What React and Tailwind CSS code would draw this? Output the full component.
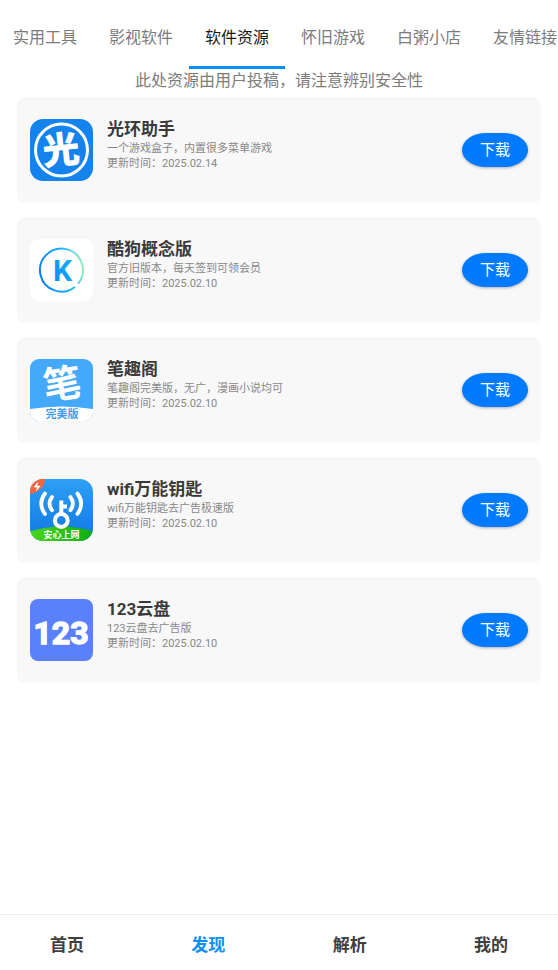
import { useState } from 'react';

const GuangIcon = () => (
    <svg viewBox="0 0 63 62" className="w-[63px] h-[62px] shrink-0" aria-hidden="true">
        <rect width="63" height="62" rx="13" fill="#1583ee" />
        <circle cx="31.5" cy="31" r="26" fill="none" stroke="#fff" strokeWidth="3" />
        <text x="31" y="44" textAnchor="middle" transform="rotate(-6 31.5 31)" fontSize="36" fontWeight="700" fill="#fff" stroke="#fff" strokeWidth="1.2" fontFamily="Noto Sans CJK SC, sans-serif">光</text>
    </svg>
);

const KugouIcon = () => (
    <svg viewBox="0 0 63 62" className="w-[63px] h-[62px] shrink-0" aria-hidden="true">
        <defs>
            <linearGradient id="kugouRing" x1="0" y1="0.6" x2="1" y2="0.4">
                <stop offset="0" stopColor="#0a7cf8" />
                <stop offset="0.6" stopColor="#1fb3f5" />
                <stop offset="1" stopColor="#8df0c0" />
            </linearGradient>
            <linearGradient id="kugouK" x1="0" y1="1" x2="1" y2="0">
                <stop offset="0" stopColor="#0b86f7" />
                <stop offset="1" stopColor="#17b8f4" />
            </linearGradient>
        </defs>
        <rect width="63" height="62" rx="9" fill="#fff" />
        <path d="M45.1 47.7 A21.5 21.5 0 1 1 48.1 44.7" fill="none" stroke="url(#kugouRing)" strokeWidth="2" />
        <text x="32.5" y="41.5" textAnchor="middle" fontSize="30" fontWeight="700" fill="url(#kugouK)" fontFamily="Roboto, sans-serif">K</text>
    </svg>
);

const BiquIcon = () => (
    <svg viewBox="0 0 63 62" className="w-[63px] h-[62px] shrink-0" aria-hidden="true">
        <defs>
            <clipPath id="biquClip">
                <rect width="63" height="62" rx="9" />
            </clipPath>
        </defs>
        <g clipPath="url(#biquClip)">
            <rect width="63" height="62" fill="#45a9fb" />
            <path d="M0 50 Q31.5 45 63 50 V62 H0 Z" fill="#fff" />
        </g>
        <text x="32" y="38.5" textAnchor="middle" transform="rotate(-8 32 24)" fontSize="38" fontWeight="700" fill="#fff" fontFamily="Noto Sans CJK SC, sans-serif">笔</text>
        <text x="32" y="58.5" textAnchor="middle" fontSize="11" fontWeight="700" fill="#3f9df0" fontFamily="Noto Sans CJK SC, sans-serif">完美版</text>
    </svg>
);

const WifiKeyIcon = () => (
    <svg viewBox="0 0 63 62" className="w-[63px] h-[62px] shrink-0" aria-hidden="true">
        <defs>
            <linearGradient id="wifiSky" x1="0" y1="0" x2="0" y2="1">
                <stop offset="0" stopColor="#2f9ff5" />
                <stop offset="1" stopColor="#0f78e2" />
            </linearGradient>
            <linearGradient id="wifiGrass" x1="0" y1="0" x2="1" y2="0">
                <stop offset="0" stopColor="#4ad61c" />
                <stop offset="1" stopColor="#10ad12" />
            </linearGradient>
            <clipPath id="wifiClip">
                <rect width="63" height="62" rx="13" />
            </clipPath>
        </defs>
        <g clipPath="url(#wifiClip)">
            <rect width="63" height="62" fill="url(#wifiSky)" />
            <path d="M0 0 H15 Q14 12 0 15 Z" fill="#f8623f" />
            <path d="M8.2 2.5 L3.5 8.2 L7 8.6 L5.8 12.8 L10.6 7 L7.2 6.6 Z" fill="#fff" />
            <path d="M0 52.5 Q31.5 42.5 63 52.5 V62 H0 Z" fill="url(#wifiGrass)" />
        </g>
        <g fill="none" stroke="#fff" strokeLinecap="round">
            <path d="M15 14.5 Q7.5 24.5 15 35" strokeWidth="3.8" />
            <path d="M22 18 Q17 24.5 22 31.2" strokeWidth="3.8" />
            <path d="M47.4 14.5 Q54.9 24.5 47.4 35" strokeWidth="3.8" />
            <path d="M40.4 18 Q45.4 24.5 40.4 31.2" strokeWidth="3.8" />
            <circle cx="31.3" cy="41.5" r="6.4" strokeWidth="4" />
            <path d="M31.3 34 V23.5 M31.3 27.5 H35" strokeWidth="4" strokeLinecap="square" />
        </g>
        <text x="31.5" y="59" textAnchor="middle" fontSize="9" fontWeight="700" fill="#fff" fontFamily="Noto Sans CJK SC, sans-serif">安心上网</text>
    </svg>
);

const PanIcon = () => (
    <svg viewBox="0 0 63 62" className="w-[63px] h-[62px] shrink-0" aria-hidden="true">
        <rect width="63" height="62" rx="8" fill="#5b80fb" />
        <text x="31" y="44.5" textAnchor="middle" fontSize="32" fontWeight="700" fill="#fff" fontFamily="Roboto, sans-serif" stroke="#fff" strokeWidth="1.4">123</text>
    </svg>
);

const tabs = ['实用工具', '影视软件', '软件资源', '怀旧游戏', '白粥小店', '友情链接'];

const apps = [
    { name: '光环助手', desc: '一个游戏盒子，内置很多菜单游戏', date: '2025.02.14', icon: GuangIcon },
    { name: '酷狗概念版', desc: '官方旧版本，每天签到可领会员', date: '2025.02.10', icon: KugouIcon },
    { name: '笔趣阁', desc: '笔趣阁完美版，无广，漫画小说均可', date: '2025.02.10', icon: BiquIcon },
    { name: 'wifi万能钥匙', desc: 'wifi万能钥匙去广告极速版', date: '2025.02.10', icon: WifiKeyIcon },
    { name: '123云盘', desc: '123云盘去广告版', date: '2025.02.10', icon: PanIcon },
];

const AppCard = ({ app }) => {
    const Icon = app.icon;
    return (
        <li className="flex items-start bg-[#f8f8f8] rounded-lg px-[13px] py-[22px]">
            <Icon />
            <div className="flex-1 min-w-0 ml-[14px]">
                <h2 className="text-[17px] leading-5 font-bold text-[#3a3a3a] mb-[2px]">{app.name}</h2>
                <p className="text-[11px] leading-[15px] text-[#888888]">{app.desc}</p>
                <p className="text-[11px] leading-[15px] text-[#888888]">更新时间：{app.date}</p>
            </div>
            <button type="button" className="self-center shrink-0 w-[66px] h-[34px] rounded-[24px/50%] bg-[#007aff] text-white text-[15px] shadow-[0_1px_3px_rgba(0,0,0,0.3)]">
                下载
            </button>
        </li>
    );
};

const App = () => {
    const [tab, setTab] = useState('软件资源');
    const [page, setPage] = useState('发现');

    return (
        <div className="min-h-screen flex flex-col bg-white overflow-x-hidden font-['Roboto','Noto_Sans_CJK_SC',sans-serif]">
            <nav className="flex -ml-[3px]">
                {tabs.map(name => (
                    <button
                        key={name}
                        type="button"
                        onClick={() => setTab(name)}
                        className={`shrink-0 px-4 pt-[26px] pb-4 text-base leading-6 border-b-[3px] ${tab === name ? 'text-[#1a1a1a] border-[#0a8ff5]' : 'text-[#7c7c7c] border-transparent'}`}
                    >
                        {name}
                    </button>
                ))}
            </nav>

            <main className="flex-1 px-[17px] pb-4">
                <p className="text-center text-base leading-6 text-[#7c7c7c] mb-1">此处资源由用户投稿，请注意辨别安全性</p>
                <ul className="flex flex-col gap-[14px]">
                    {apps.map(app => (
                        <AppCard key={app.name} app={app} />
                    ))}
                </ul>
            </main>

            <footer className="sticky bottom-0 flex justify-between bg-white border-t border-[#eeeeee] px-[50px] pt-4 pb-[11px]">
                {['首页', '发现', '解析', '我的'].map(name => (
                    <button
                        key={name}
                        type="button"
                        onClick={() => setPage(name)}
                        className={`text-[17px] leading-7 font-bold ${page === name ? 'text-[#0a8ff5]' : 'text-[#404040]'}`}
                    >
                        {name}
                    </button>
                ))}
            </footer>
        </div>
    );
};

export default App;
